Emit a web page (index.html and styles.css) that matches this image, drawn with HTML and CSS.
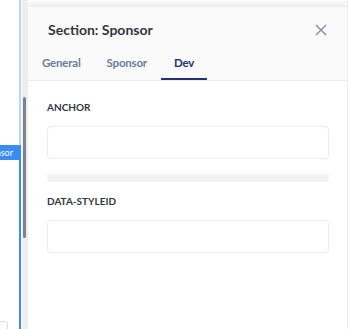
FILE: index.html
```html
<!DOCTYPE html>
<html lang="en">
<head>
    <meta charset="UTF-8">
    <meta name="viewport" content="width=device-width, initial-scale=1.0">
    <title>Section settings</title>
    <link rel="stylesheet" href="styles.css">
</head>
<body>
    <div class="canvas">
        <div class="block-hover"></div>
        <div class="block-selected">
            <span class="block-badge">Sponsor</span>
            <div class="block-stub"></div>
        </div>
    </div>

    <div class="scrollbar">
        <div class="scroll-thumb"></div>
    </div>

    <div class="panel">
        <div class="panel-head">
            <div class="title-row">
                <h2>Section: Sponsor</h2>
                <button class="close-btn" aria-label="Close">
                    <svg width="12" height="12" viewBox="0 0 12 12">
                        <path d="M1 1 L11 11 M11 1 L1 11" stroke="#7d8ca8" stroke-width="1.4" fill="none" />
                    </svg>
                </button>
            </div>
            <div class="tabs">
                <a href="#" class="tab">General</a>
                <a href="#" class="tab">Sponsor</a>
                <a href="#" class="tab active">Dev</a>
            </div>
        </div>

        <div class="panel-body">
            <div class="field">
                <label>ANCHOR</label>
                <input type="text">
            </div>
            <div class="divider"></div>
            <div class="field">
                <label>DATA-STYLEID</label>
                <input type="text">
            </div>
        </div>
    </div>
</body>
</html>
```

FILE: styles.css
```css
    body {
        margin: 0;
        width: 349px;
        height: 329px;
        overflow: hidden;
        background-color: white;
        font-family: "Lato", "Liberation Sans", sans-serif;
        display: flex;
        flex-direction: row;
    }
    .canvas {
        width: 22px;
        height: 100%;
        display: flex;
        flex-direction: column;
    }
    .block-hover {
        height: 145px;
        width: 19px;
        border-right: 2px solid #b9d5fb;
    }
    .block-selected {
        flex-grow: 1;
        width: 19px;
        border-right: 2px solid #3a8bf4;
        position: relative;
    }
    .block-badge {
        position: absolute;
        top: 0;
        right: -2px;
        height: 15px;
        line-height: 15px;
        padding: 0 8px 0 6px;
        background-color: #3a8bf4;
        color: white;
        font-size: 9px;
        border-radius: 0 4px 0 0;
        white-space: nowrap;
    }
    .block-stub {
        position: absolute;
        left: -4px;
        bottom: -4px;
        width: 10px;
        height: 10px;
        border: 1px solid #dcdcdc;
        border-radius: 0 3px 0 0;
        background-color: white;
    }
    .scrollbar {
        width: 6px;
        height: 100%;
        background-color: #eeeeee;
        padding-top: 97px;
        box-sizing: border-box;
    }
    .scroll-thumb {
        width: 3px;
        height: 141px;
        margin-left: 1px;
        background-color: #7b838d;
        border-radius: 2px;
    }
    .panel {
        width: 320px;
        height: 100%;
        display: flex;
        flex-direction: column;
        border-right: 1px solid #ececec;
        box-sizing: border-box;
        background-color: white;
    }
    .panel-head {
        margin-top: 6px;
        background-color: #fafafb;
        border-top: 1px solid #ececec;
        border-bottom: 1px solid #ececec;
        box-shadow: 0 -4px 5px #f0f0f0;
    }
    .title-row {
        display: flex;
        justify-content: space-between;
        align-items: center;
        padding: 12px 20px 0 20px;
        height: 21px;
    }
    .title-row h2 {
        margin: 0;
        font-size: 14px;
        font-weight: 700;
        color: #32363f;
    }
    .close-btn {
        background: none;
        border: none;
        padding: 0;
        cursor: pointer;
        display: flex;
        margin-top: 1px;
    }
    .tabs {
        display: flex;
        flex-direction: row;
        gap: 2px;
        margin-top: 16px;
        padding-left: 2px;
    }
    .tab {
        padding: 0 12px 9px 12px;
        font-size: 11.5px;
        font-weight: 700;
        letter-spacing: -0.2px;
        color: #6b7d9c;
        text-decoration: none;
        border-bottom: 2px solid transparent;
    }
    .tab.active {
        color: #22307a;
        border-bottom-color: #22307a;
        padding: 0 13px 9px 13px;
    }
    .panel-body {
        padding: 20px 18px 0 19px;
    }
    .field label {
        display: block;
        font-size: 10px;
        font-weight: 700;
        color: #32363f;
        margin-bottom: 13px;
    }
    .field input {
        display: block;
        width: 100%;
        height: 33px;
        box-sizing: border-box;
        border: 1px solid #ebebeb;
        border-radius: 4px;
        background-color: white;
    }
    .divider {
        height: 8px;
        background-color: #f3f3f3;
        margin: 15px 0 13px 0;
    }
```
